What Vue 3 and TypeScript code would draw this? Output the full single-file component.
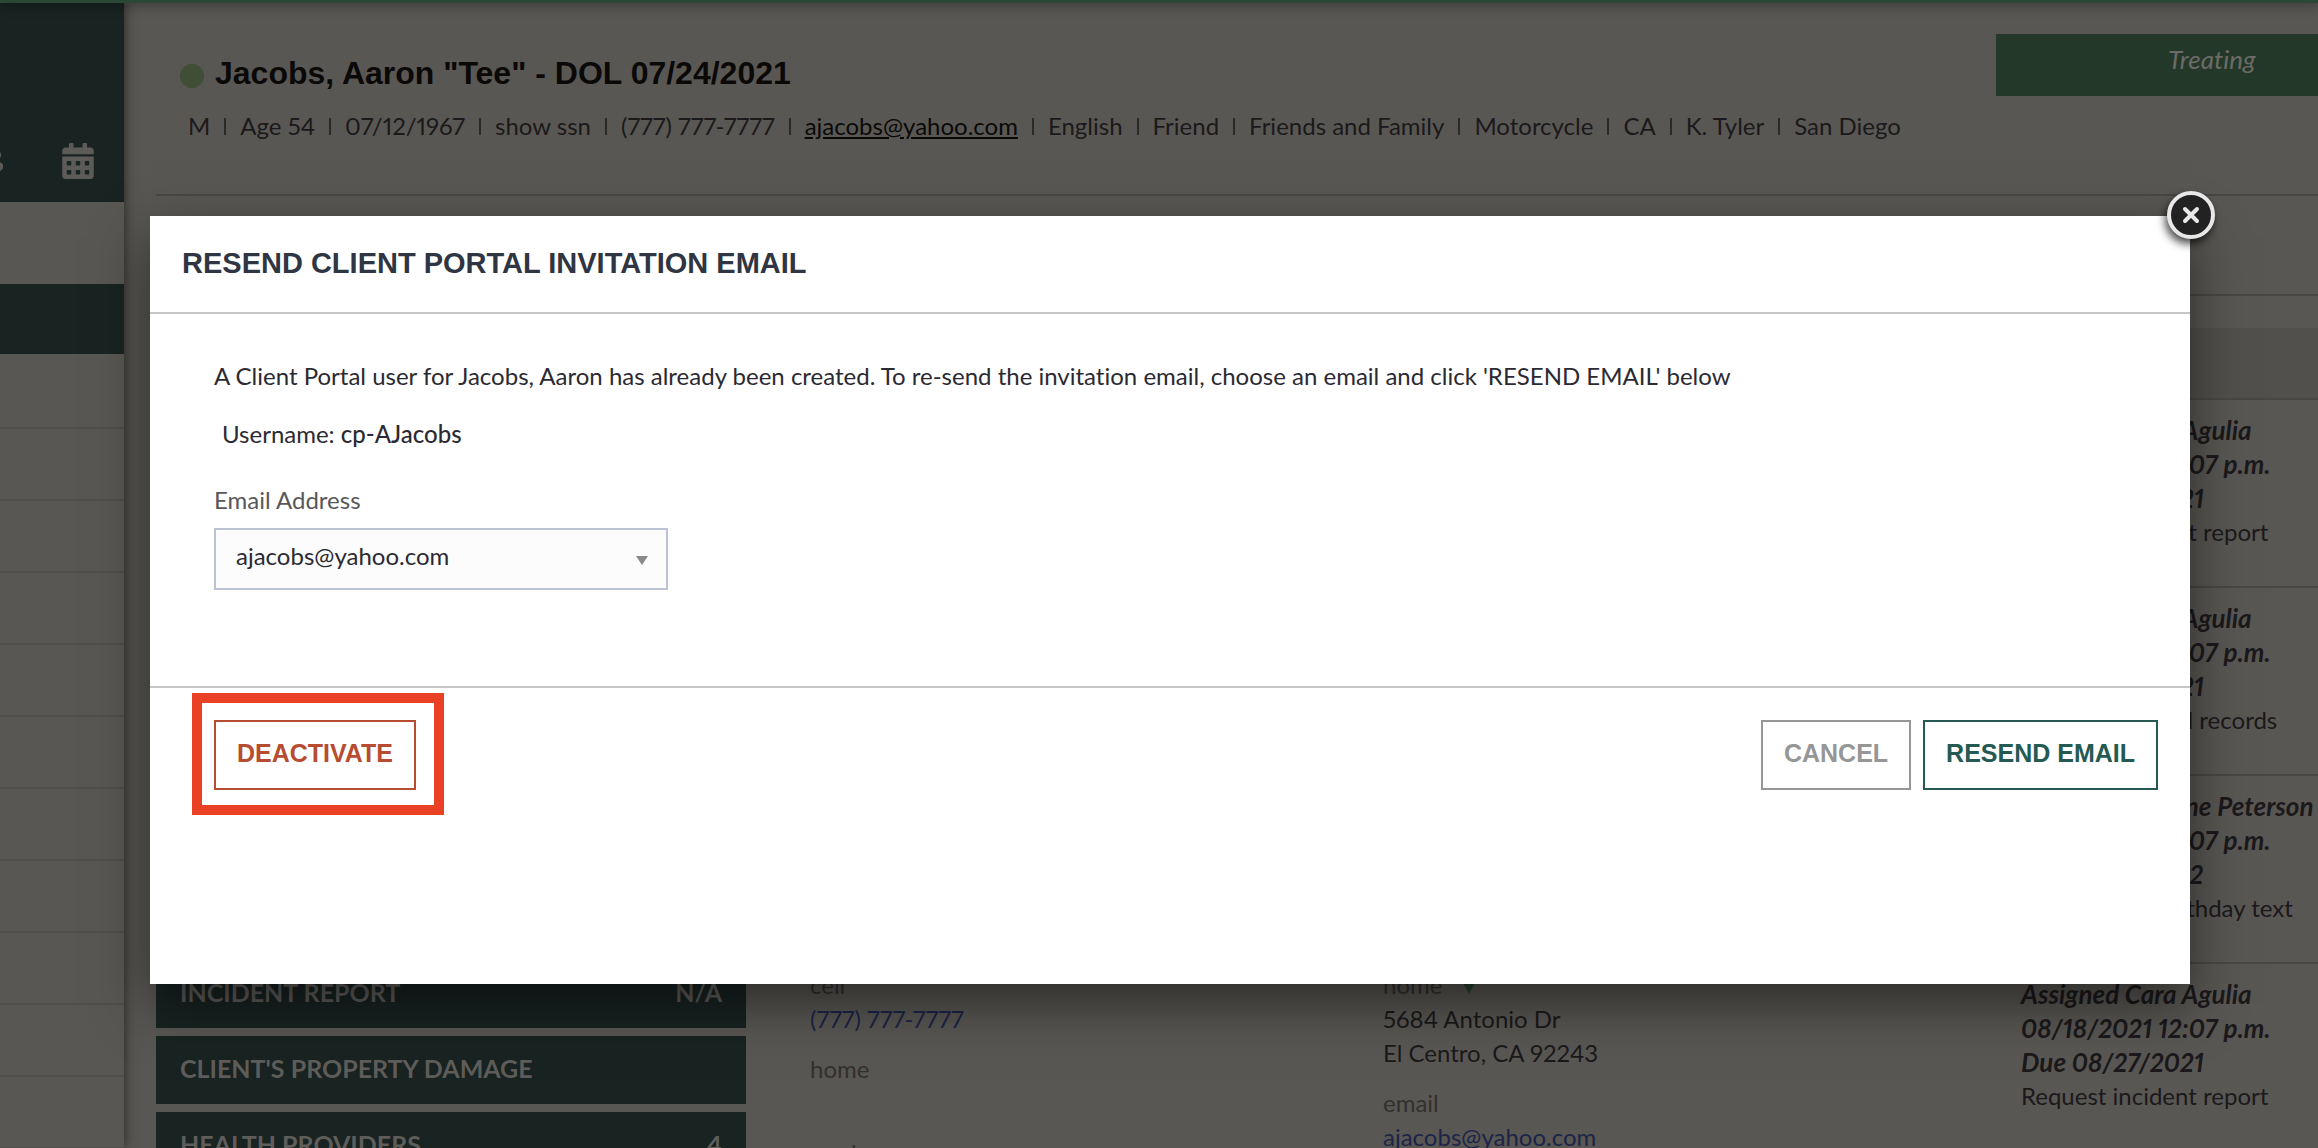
<script setup lang="ts">
import { ref } from 'vue'

interface Task {
  assignee: string
  time: string
  due: string
  title: string
}

const details: string[] = ['M', 'Age 54', '07/12/1967', 'show ssn', '(777) 777-7777', 'ajacobs@yahoo.com', 'English', 'Friend', 'Friends and Family', 'Motorcycle', 'CA', 'K. Tyler', 'San Diego']

const panels = [
  { name: 'INCIDENT REPORT', value: 'N/A' },
  { name: "CLIENT'S PROPERTY DAMAGE", value: '' },
  { name: 'HEALTH PROVIDERS', value: '4' },
]

const tasks: Task[] = [
  { assignee: 'Assigned Cara Agulia', time: '08/18/2021 12:07 p.m.', due: 'Due 08/27/2021', title: 'Request incident report' },
  { assignee: 'Assigned Cara Agulia', time: '08/18/2021 12:07 p.m.', due: 'Due 08/27/2021', title: 'Request medical records' },
  { assignee: 'Assigned Darlene Peterson', time: '08/18/2021 12:07 p.m.', due: 'Due 07/12/2022', title: "Send client's birthday text" },
  { assignee: 'Assigned Cara Agulia', time: '08/18/2021 12:07 p.m.', due: 'Due 08/27/2021', title: 'Request incident report' },
]

const email = ref('ajacobs@yahoo.com')
</script>

<template>
  <div class="page">
    <aside class="sidebar">
      <div class="side-head">
        <svg class="people" width="4" height="24" viewBox="0 0 4 24" aria-hidden="true">
          <circle cx="-3" cy="6" r="4" />
          <path d="M-4 13h2c3 0 5 2 5 4v1c0 2-1 3-3 4h-4z" />
        </svg>
        <svg class="calendar" width="32" height="36" viewBox="0 0 448 512" aria-hidden="true">
          <path d="M0 464c0 26.500 21.500 48 48 48h352c26.500 0 48-21.500 48-48V192H0v272zm320-196c0-6.600 5.400-12 12-12h40c6.600 0 12 5.400 12 12v40c0 6.600-5.400 12-12 12h-40c-6.600 0-12-5.400-12-12v-40zm0 128c0-6.600 5.400-12 12-12h40c6.600 0 12 5.400 12 12v40c0 6.600-5.400 12-12 12h-40c-6.600 0-12-5.400-12-12v-40zM192 268c0-6.600 5.400-12 12-12h40c6.600 0 12 5.400 12 12v40c0 6.600-5.400 12-12 12h-40c-6.600 0-12-5.400-12-12v-40zm0 128c0-6.600 5.400-12 12-12h40c6.600 0 12 5.400 12 12v40c0 6.600-5.400 12-12 12h-40c-6.600 0-12-5.400-12-12v-40zM64 268c0-6.600 5.400-12 12-12h40c6.600 0 12 5.400 12 12v40c0 6.600-5.400 12-12 12H76c-6.600 0-12-5.400-12-12v-40zm0 128c0-6.600 5.400-12 12-12h40c6.600 0 12 5.400 12 12v40c0 6.600-5.400 12-12 12H76c-6.600 0-12-5.400-12-12v-40zM400 64h-48V16c0-8.800-7.200-16-16-16h-32c-8.800 0-16 7.200-16 16v48H160V16c0-8.800-7.200-16-16-16h-32c-8.800 0-16 7.200-16 16v48H48C21.500 64 0 85.500 0 112v48h448v-48c0-26.500-21.500-48-48-48z" />
        </svg>
      </div>
      <div class="side-space"></div>
      <div class="side-active"></div>
      <div v-for="n in 11" :key="n" class="side-row"></div>
    </aside>

    <main class="main">
      <header class="client">
        <div class="client-info">
          <h1 class="client-name"><span class="dot"></span>Jacobs, Aaron "Tee" - DOL 07/24/2021</h1>
          <ul class="details">
            <li v-for="d in details" :key="d">
              <a v-if="d.includes('@')" :href="'mailto:' + d">{{ d }}</a>
              <template v-else>{{ d }}</template>
            </li>
          </ul>
        </div>
        <div class="stage"><em>Treating</em></div>
      </header>
      <div class="tabs"></div>

      <div class="columns">
        <section class="panels">
          <div v-for="p in panels" :key="p.name" class="panel">
            <span>{{ p.name }}</span><span>{{ p.value }}</span>
          </div>
        </section>
        <section class="contact phones">
          <p class="kind">cell</p>
          <p class="entry"><a class="phone" href="tel:7777777777">(777) 777-7777</a></p>
          <p class="kind">home</p>
          <p class="entry"></p>
          <p class="kind">work</p>
        </section>
        <section class="contact address">
          <p class="kind">home <svg width="16" height="14" viewBox="0 0 16 14" aria-hidden="true"><path d="M0 0h16L8 14z" fill="#26422d" /></svg></p>
          <p class="entry">5684 Antonio Dr<br />El Centro, CA 92243</p>
          <p class="kind">email</p>
          <p class="entry"><a href="mailto:ajacobs@yahoo.com">ajacobs@yahoo.com</a></p>
        </section>
        <section class="tasks">
          <div class="tasks-head"></div>
          <article v-for="(t, i) in tasks" :key="i" class="task">
            <b>{{ t.assignee }}</b>
            <b>{{ t.time }}</b>
            <b>{{ t.due }}</b>
            <span>{{ t.title }}</span>
          </article>
        </section>
      </div>
    </main>
    <div class="top-strip"></div>

    <div class="overlay">
      <div class="modal" role="dialog" aria-labelledby="dialog-title">
        <button class="close" type="button" aria-label="Close">
          <svg width="20" height="20" viewBox="0 0 20 20" aria-hidden="true"><path d="M4 4l12 12M16 4L4 16" fill="none" stroke="#e8e8e8" stroke-width="4" stroke-linecap="round" /></svg>
        </button>
        <h2 id="dialog-title" class="modal-title">RESEND CLIENT PORTAL INVITATION EMAIL</h2>
        <div class="modal-body">
          <p class="message">A Client Portal user for Jacobs, Aaron has already been created. To re-send the invitation email, choose an email and click 'RESEND EMAIL' below</p>
          <p class="username">Username: <span>cp-AJacobs</span></p>
          <label for="email">Email Address</label>
          <div class="select-wrap">
            <select id="email" v-model="email">
              <option>ajacobs@yahoo.com</option>
            </select>
            <svg class="arrow" width="12" height="9" viewBox="0 0 12 9" aria-hidden="true"><path d="M0 0h12L6 9z" fill="#8a8a8a" /></svg>
          </div>
        </div>
        <footer class="modal-foot">
          <div class="highlight">
            <button type="button" class="btn danger">DEACTIVATE</button>
          </div>
          <div class="actions">
            <button type="button" class="btn muted">CANCEL</button>
            <button type="button" class="btn primary">RESEND EMAIL</button>
          </div>
        </footer>
      </div>
    </div>
  </div>
</template>

<style>
body {
  margin: 0;
  background: #595753;
}
</style>

<style scoped>
* {
  box-sizing: border-box;
}
h1, h2, p, ul {
  margin: 0;
  padding: 0;
}
.page {
  position: relative;
  display: flex;
  height: 100vh;
  overflow: hidden;
  background: #595753;
  color: #1b191b;
  font-family: Lato, "Noto Sans", sans-serif;
  font-size: 24px;
  font-variant-ligatures: none;
  font-variant-numeric: proportional-nums;
  line-height: 34px;
}
.top-strip {
  position: absolute;
  top: 0;
  left: 0;
  right: 0;
  height: 3px;
  background: #2a4634;
  box-shadow: 0 0 12px 1px rgba(0, 0, 0, 0.6);
}
.sidebar {
  flex: none;
  width: 124px;
  background: #595753;
  box-shadow: 0 0 12px rgba(0, 0, 0, 0.6);
}
.side-head {
  display: flex;
  justify-content: space-between;
  align-items: flex-end;
  height: 202px;
  padding: 0 30px 23px 0;
  background: #182322;
  fill: #5c5b58;
}
.people {
  margin-bottom: 6px;
}
.side-space {
  height: 82px;
}
.side-active {
  height: 70px;
  margin-bottom: 3px;
  background: #182322;
}
.side-row {
  height: 72px;
  border-bottom: 2px solid #504e4b;
}
.main {
  flex: 1;
  min-width: 0;
  padding-left: 32px;
}
.client {
  display: flex;
  justify-content: space-between;
  align-items: flex-start;
  height: 196px;
  padding-top: 34px;
  border-bottom: 2px solid #494744;
}
.client-info {
  padding: 16px 0 0 24px;
}
.client-name {
  display: flex;
  align-items: center;
  gap: 11px;
  color: #0a0908;
  font: bold 32px/46px "Liberation Sans", Arial, sans-serif;
}
.dot {
  width: 24px;
  height: 24px;
  margin-top: 6px;
  border-radius: 50%;
  background: #3f4e35;
}
.details {
  display: flex;
  align-items: center;
  padding: 13px 0 0 8px;
  list-style: none;
  white-space: nowrap;
}
.details li {
  display: flex;
  align-items: center;
}
.details li + li::before {
  content: "";
  width: 2px;
  height: 17px;
  margin: 0 14px;
  background: #2b292a;
}
.details a {
  color: #0a0908;
}
.stage {
  width: 322px;
  height: 62px;
  padding: 8px 0 0 172px;
  background: #243829;
  color: #6b6b67;
  font-size: 26px;
}
.tabs {
  height: 100px;
  border-bottom: 2px solid #494744;
}
.columns {
  display: flex;
}
.panels {
  flex: none;
  width: 590px;
  padding-top: 664px;
}
.panel {
  display: flex;
  justify-content: space-between;
  height: 68px;
  margin-bottom: 8px;
  padding: 15px 24px 0;
  background: #182322;
  color: #5f5d5a;
  font-size: 25px;
  font-weight: bold;
}
.contact {
  padding-top: 672px;
}
.phones {
  flex: 509;
  padding-left: 64px;
}
.address {
  flex: 574;
  padding-left: 64px;
}
.kind {
  color: #32302e;
}
.kind svg {
  margin-left: 12px;
}
.entry {
  min-height: 34px;
  margin-bottom: 16px;
}
.contact a {
  color: #1c2448;
}
.contact .phone {
  text-decoration: none;
}
.tasks {
  flex: none;
  width: 361px;
  padding-top: 32px;
}
.tasks-head {
  height: 72px;
  background: #51504d;
  border-bottom: 2px solid #494744;
}
.task {
  display: flex;
  flex-direction: column;
  height: 188px;
  padding: 13px 0 0 64px;
  border-bottom: 2px solid #494744;
  white-space: nowrap;
}
.task b {
  font-size: 26px;
  font-style: italic;
}
.overlay {
  position: absolute;
  inset: 0;
  padding: 216px 128px 0 150px;
}
.modal {
  position: relative;
  padding-bottom: 169px;
  background: #fff;
  box-shadow: 0 20px 50px rgba(0, 0, 0, 0.5);
  color: #2b2a33;
}
.modal-title {
  padding: 24px 32px 26px;
  border-bottom: 2px solid #c6c6c6;
  color: #2f3542;
  font: bold 29px/46px "Liberation Sans", Arial, sans-serif;
}
.modal-body {
  padding: 45px 64px 96px;
}
.username {
  padding: 24px 0 0 8px;
}
.username span {
  font-weight: 500;
}
.modal-body label {
  display: block;
  margin: 32px 0 11px;
  color: #58585a;
}
.select-wrap {
  position: relative;
  width: 454px;
}
.select-wrap select {
  display: block;
  width: 100%;
  height: 62px;
  padding: 0 20px 6px;
  border: 2px solid #bcc3d2;
  border-radius: 0;
  background: #fcfcfd;
  color: #2b2a33;
  font: inherit;
  appearance: none;
}
.arrow {
  position: absolute;
  top: 28px;
  right: 20px;
}
.modal-foot {
  display: flex;
  justify-content: space-between;
  align-items: flex-start;
  padding: 5px 32px 0 42px;
  border-top: 2px solid #c6c6c6;
}
.highlight {
  padding: 17px 18px 15px 12px;
  border: 10px solid #ea4025;
}
.actions {
  display: flex;
  gap: 12px;
  padding-top: 27px;
}
.btn {
  height: 70px;
  padding: 0 21px 4px;
  border: 2px solid currentColor;
  border-radius: 0;
  background: #fff;
  font: bold 25px/34px "Liberation Sans", Arial, sans-serif;
}
.danger {
  color: #b84c30;
}
.muted {
  color: #969696;
}
.primary {
  color: #245a52;
}
.close {
  position: absolute;
  top: -25px;
  right: -25px;
  display: flex;
  align-items: center;
  justify-content: center;
  width: 48px;
  height: 48px;
  padding: 0;
  border: 4px solid #e8e8e8;
  border-radius: 50%;
  background: #222;
  box-shadow: -2px 5px 8px rgba(0, 0, 0, 0.7);
}
</style>
